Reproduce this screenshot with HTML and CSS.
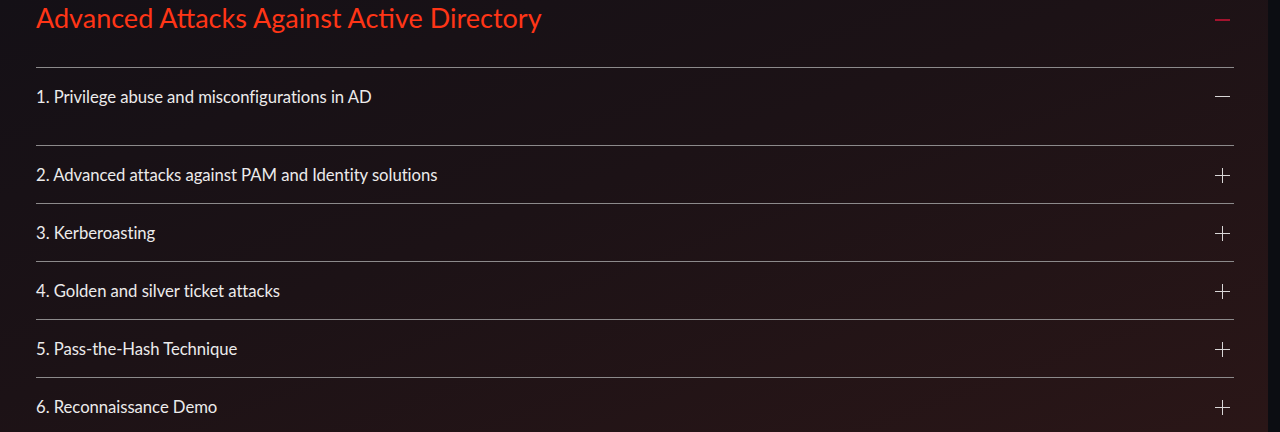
FILE: index.html
```html
<!DOCTYPE html>
<html lang="en">

<head>
    <meta charset="UTF-8">
    <meta name="viewport" content="width=device-width, initial-scale=1.0">
    <title>Advanced Attacks Against Active Directory</title>
    <link rel="stylesheet" href="styles.css">
</head>

<body>
    <div class="page">
        <section class="program">
            <div class="program-head">
                <h2>Advanced Attacks Against Active Directory</h2>
                <span class="icon icon-red minus"></span>
            </div>
            <div class="modules">
                <div class="module open">
                    <button class="module-title">
                        <span>1. Privilege abuse and misconfigurations in AD</span>
                        <span class="icon minus"></span>
                    </button>
                    <div class="module-body"></div>
                </div>
                <div class="module">
                    <button class="module-title">
                        <span>2. Advanced attacks against PAM and Identity solutions</span>
                        <span class="icon plus"></span>
                    </button>
                </div>
                <div class="module">
                    <button class="module-title">
                        <span>3. Kerberoasting</span>
                        <span class="icon plus"></span>
                    </button>
                </div>
                <div class="module">
                    <button class="module-title">
                        <span>4. Golden and silver ticket attacks</span>
                        <span class="icon plus"></span>
                    </button>
                </div>
                <div class="module">
                    <button class="module-title">
                        <span>5. Pass-the-Hash Technique</span>
                        <span class="icon plus"></span>
                    </button>
                </div>
                <div class="module">
                    <button class="module-title">
                        <span>6. Reconnaissance Demo</span>
                        <span class="icon plus"></span>
                    </button>
                </div>
            </div>
        </section>
        <div class="edge"></div>
    </div>
</body>

</html>
```

FILE: styles.css
```css
body {
    margin: 0;
    padding: 0;
    font-family: Lato, "Open Sans", sans-serif;
    background-color: #0c0d12;
    overflow: hidden;
}

.page {
    display: flex;
    height: 432px;
}

.program {
    flex: 1;
    padding: 0 34px 0 36px;
    background: linear-gradient(160deg, #141016 0%, #1c1216 45%, #2a1617 100%);
}

.edge {
    width: 12px;
    background-color: #0c0d12;
}

.program-head {
    display: flex;
    justify-content: space-between;
    align-items: flex-start;
    height: 67px;
}

.program-head h2 {
    margin: 0;
    font-size: 27px;
    line-height: 36px;
    font-weight: 400;
    color: #ff3516;
}

.program-head .icon {
    margin-top: 19px;
    margin-right: 4px;
}

.module {
    border-top: 1px solid #8c8a8b;
}

.module-title {
    display: flex;
    justify-content: space-between;
    align-items: center;
    width: 100%;
    height: 57px;
    padding: 0 4px 0 0;
    background: none;
    border: none;
    font-family: inherit;
    font-size: 16.7px;
    letter-spacing: -0.05px;
    color: #ecebeb;
    text-align: left;
    cursor: pointer;
}

.module-body {
    height: 20px;
}

.icon {
    position: relative;
    width: 15px;
    height: 15px;
}

.icon::before,
.icon::after {
    content: "";
    position: absolute;
    background-color: #d8d6d6;
}

.icon::before {
    left: 0;
    right: 0;
    top: 7px;
    height: 1px;
}

.plus {
    margin-top: 2px;
}

.plus::after {
    top: 0;
    bottom: 0;
    left: 7px;
    width: 1px;
}

.minus {
    height: 1px;
}

.minus::before {
    top: 0;
}

.icon-red::before {
    background-color: #a3132e;
    height: 2px;
}
```
